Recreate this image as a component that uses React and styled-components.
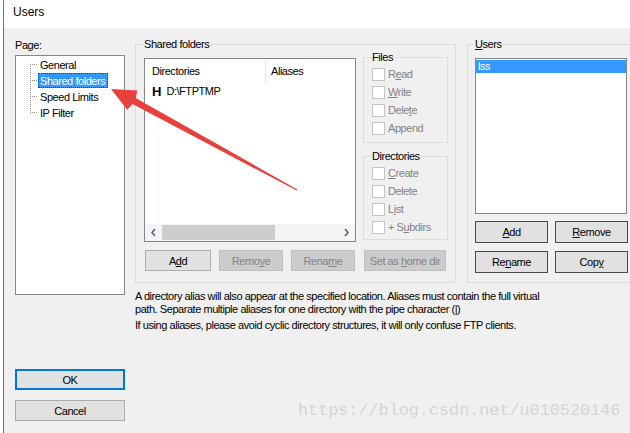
import React from 'react'
import styled, { createGlobalStyle } from 'styled-components'

const GlobalStyle = createGlobalStyle`
    html, body {
        margin: 0;
        padding: 0;
        background: #ffffff;
    }
    body {
        font-family: "Liberation Sans", Arial, sans-serif;
        font-size: 11px;
        letter-spacing: -0.45px;
        color: #000;
    }
    * { box-sizing: border-box; }
`

const Window = styled.div`
    position: relative;
    width: 627px;
    height: 433px;
    margin-left: 3px;
    border-left: 1px solid #3a7cb8;
    background: #f0f0f0;
    display: flex;
    flex-direction: column;
    overflow: hidden;
`

const TitleBar = styled.div`
    height: 28px;
    flex-shrink: 0;
    background: #ffffff;
    padding: 5px 0 0 9px;
    font-size: 12px;
    letter-spacing: 0;
    line-height: 15px;
`

const Body = styled.div`
    flex: 1;
    display: flex;
    gap: 10px;
    padding: 10px 0 0 11px;
`

const LeftColumn = styled.div`
    width: 110px;
    flex-shrink: 0;
    display: flex;
    flex-direction: column;
`

const Label = styled.div`
    line-height: 13px;
    margin-top: 1px;
`

const TreeBox = styled.div`
    margin-top: 3px;
    height: 240px;
    background: #ffffff;
    border: 1px solid #828790;
    padding: 0 0 0 14px;
`

const TreeItem = styled.div`
    display: flex;
    align-items: center;
    height: 16px;
    line-height: 16px;
`

const Connector = styled.span`
    width: 8px;
    height: 16px;
    flex-shrink: 0;
    background-image:
        repeating-linear-gradient(to right, #8c8c8c 0 1px, transparent 1px 2px),
        repeating-linear-gradient(to bottom, #8c8c8c 0 1px, transparent 1px 2px);
    background-size: 8px 1px, 1px ${p => (p.$first || p.$last ? '8px' : '16px')};
    background-position: 0 8px, 0 ${p => (p.$first ? '8px' : '0')};
    background-repeat: no-repeat;
`

const TreeText = styled.span`
    padding: 0 2px 0 1px;
    height: 15px;
    line-height: 14px;
    background: ${p => (p.$selected ? '#3399ff' : 'transparent')};
    color: ${p => (p.$selected ? '#ffffff' : '#000')};
    border: 1px ${p => (p.$selected ? 'dotted #1b3f6e' : 'solid transparent')};
`

const Button = styled.button`
    font-family: inherit;
    font-size: 11px;
    letter-spacing: -0.45px;
    height: ${p => p.$h || 21}px;
    width: ${p => (p.$w ? `${p.$w}px` : 'auto')};
    padding: 0;
    margin: 0;
    border: ${p => (p.$default ? '2px solid #0078d7' : `1px solid ${p.$dark ? '#4a4a4a' : '#adadad'}`)};
    background: ${p => (p.disabled ? '#cccccc' : '#e1e1e1')};
    color: ${p => (p.disabled ? '#838383' : '#000')};
    border-color: ${p => (p.disabled ? '#bfbfbf' : undefined)};
    text-align: center;
`

const OkButton = styled(Button)`
    margin-top: 74px;
`

const CancelButton = styled(Button)`
    margin-top: 10px;
`

const RightColumn = styled.div`
    flex: 1;
    min-width: 0;
    display: flex;
    flex-direction: column;
`

const TopRow = styled.div`
    display: flex;
    gap: 11px;
`

const GroupBox = styled.fieldset`
    margin: 0;
    min-width: 0;
    width: ${p => p.$w}px;
    flex-shrink: 0;
    border: 1px solid #dcdcdc;
    padding: ${p => p.$pad || '0 8px 9px 8px'};
`

const Legend = styled.legend`
    padding: 0 1px;
    margin-left: -1px;
    line-height: 13px;
    color: #000;
`

const SharedTop = styled.div`
    display: flex;
    gap: 7px;
`

const ListView = styled.div`
    margin-top: 7px;
    width: 212px;
    height: 184px;
    background: #ffffff;
    border: 1px solid #828790;
    display: flex;
    flex-direction: column;
`

const ListHeader = styled.div`
    display: flex;
    height: 24px;
    line-height: 24px;
`

const HeaderCell = styled.div`
    width: ${p => (p.$w ? `${p.$w}px` : 'auto')};
    flex: ${p => (p.$w ? 'none' : 1)};
    padding-left: ${p => p.$pl}px;
    border-right: ${p => (p.$w ? '1px solid #e5e5e5' : 'none')};
`

const ListRows = styled.div`
    flex: 1;
`

const ListRow = styled.div`
    display: flex;
    align-items: center;
    gap: 5px;
    height: 16px;
    padding-left: 7px;
`

const HomeMark = styled.span`
    font-weight: bold;
    font-size: 13px;
    letter-spacing: 0;
`

const ScrollBar = styled.div`
    height: 17px;
    display: flex;
    align-items: stretch;
    background: #f4f4f4;
`

const ScrollArrow = styled.div`
    width: 17px;
    display: flex;
    align-items: center;
    justify-content: center;
    flex-shrink: 0;
`

const ScrollTrack = styled.div`
    flex: 1;
    padding: 1px 0;
`

const ScrollThumb = styled.div`
    width: 113px;
    height: 100%;
    background: #cdcdcd;
`

const PermColumn = styled.div`
    flex: 1;
    display: flex;
    flex-direction: column;
    gap: 7px;
`

const CheckRow = styled.label`
    display: flex;
    align-items: center;
    gap: 3px;
    height: 18px;
    color: #838383;
`

const CheckBox = styled.span`
    width: 13px;
    height: 13px;
    border: 1px solid #c4c4c4;
    background: #ffffff;
    flex-shrink: 0;
`

const ButtonRow = styled.div`
    display: flex;
    gap: 8px;
    margin-top: 8px;
    padding-left: 1px;
`

const UserList = styled.div`
    margin-top: 7px;
    width: 152px;
    height: 156px;
    background: #ffffff;
    border: 1px solid #828790;
    padding: 1px 0 0 0;
`

const UserItem = styled.div`
    height: 13px;
    line-height: 13px;
    padding-left: 2px;
    background: ${p => (p.$selected ? '#3399ff' : 'transparent')};
    color: ${p => (p.$selected ? '#ffffff' : '#000')};
`

const UserButtons = styled.div`
    display: grid;
    grid-template-columns: 73px 73px;
    column-gap: 7px;
    row-gap: 8px;
    margin-top: 7px;
`

const Notes = styled.div`
    margin-top: 7px;
    line-height: 13px;
`

const NoteLine = styled.p`
    margin: ${p => (p.$gap ? '3px 0 0' : '0')};
`

const Watermark = styled.div`
    position: absolute;
    left: 294px;
    top: 401px;
    font-family: "Liberation Mono", "DejaVu Sans Mono", monospace;
    font-size: 16.8px;
    letter-spacing: 0;
    color: #d4d4d4;
`

const Overlay = styled.svg`
    position: absolute;
    left: -4px;
    top: 0;
    pointer-events: none;
`

const Chevron = ({ dir }) => (
    <svg width="7" height="9" viewBox="0 0 7 9">
        <path
            d={dir === 'left' ? 'M5 1 L2 4.5 L5 8' : 'M2 1 L5 4.5 L2 8'}
            fill="none"
            stroke="#606060"
            strokeWidth="1.6"
        />
    </svg>
)

const Check = ({ children }) => (
    <CheckRow>
        <CheckBox />
        <span>{children}</span>
    </CheckRow>
)

const treeItems = ['General', 'Shared folders', 'Speed Limits', 'IP Filter']

const App = () => {
    return (
        <>
            <GlobalStyle />
            <Window>
                <TitleBar>Users</TitleBar>
                <Body>
                    <LeftColumn>
                        <Label>Page:</Label>
                        <TreeBox>
                            {treeItems.map((item, i) => (
                                <TreeItem key={item}>
                                    <Connector $first={i === 0} $last={i === treeItems.length - 1} />
                                    <TreeText $selected={item === 'Shared folders'}>{item}</TreeText>
                                </TreeItem>
                            ))}
                        </TreeBox>
                        <OkButton $default>OK</OkButton>
                        <CancelButton>Cancel</CancelButton>
                    </LeftColumn>

                    <RightColumn>
                        <TopRow>
                            <GroupBox $w={321} $pad="0 7px 9px 8px">
                                <Legend>Shared folders</Legend>
                                <SharedTop>
                                    <ListView>
                                        <ListHeader>
                                            <HeaderCell $w={121} $pl={7}>Directories</HeaderCell>
                                            <HeaderCell $pl={5}>Aliases</HeaderCell>
                                        </ListHeader>
                                        <ListRows>
                                            <ListRow>
                                                <HomeMark>H</HomeMark>
                                                <span>D:\FTPTMP</span>
                                            </ListRow>
                                        </ListRows>
                                        <ScrollBar>
                                            <ScrollArrow><Chevron dir="left" /></ScrollArrow>
                                            <ScrollTrack><ScrollThumb /></ScrollTrack>
                                            <ScrollArrow><Chevron dir="right" /></ScrollArrow>
                                        </ScrollBar>
                                    </ListView>
                                    <PermColumn>
                                        <GroupBox $pad="1px 4px 5px 8px">
                                            <Legend>Files</Legend>
                                            <Check>R<u>e</u>ad</Check>
                                            <Check><u>W</u>rite</Check>
                                            <Check>Dele<u>t</u>e</Check>
                                            <Check>Append</Check>
                                        </GroupBox>
                                        <GroupBox $pad="1px 4px 3px 8px">
                                            <Legend>Directories</Legend>
                                            <Check><u>C</u>reate</Check>
                                            <Check>Delete</Check>
                                            <Check>L<u>i</u>st</Check>
                                            <Check>+ S<u>u</u>bdirs</Check>
                                        </GroupBox>
                                    </PermColumn>
                                </SharedTop>
                                <ButtonRow>
                                    <Button $w={66}>A<u>d</u>d</Button>
                                    <Button $w={64} disabled>Remo<u>v</u>e</Button>
                                    <Button $w={64} disabled>Rena<u>m</u>e</Button>
                                    <Button $w={82} disabled style={{ marginLeft: 1 }}>Set as <u>h</u>ome dir</Button>
                                </ButtonRow>
                            </GroupBox>

                            <GroupBox $w={172} $pad="0 7px 9px 7px">
                                <Legend><u>U</u>sers</Legend>
                                <UserList>
                                    <UserItem $selected>lss</UserItem>
                                </UserList>
                                <UserButtons>
                                    <Button $h={22} $dark><u>A</u>dd</Button>
                                    <Button $h={22} $dark><u>R</u>emove</Button>
                                    <Button $h={22} $dark>Re<u>n</u>ame</Button>
                                    <Button $h={22} $dark>Cop<u>y</u></Button>
                                </UserButtons>
                            </GroupBox>
                        </TopRow>

                        <Notes>
                            <NoteLine>
                                A directory alias will also appear at the specified location. Aliases must contain the full virtual
                                <br />
                                path. Separate multiple aliases for one directory with the pipe character (|)
                            </NoteLine>
                            <NoteLine $gap>
                                If using aliases, please avoid cyclic directory structures, it will only confuse FTP clients.
                            </NoteLine>
                        </Notes>
                    </RightColumn>
                </Body>

                <Watermark>https://blog.csdn.net/u010520146</Watermark>

                <Overlay width="630" height="433" viewBox="0 0 630 433">
                    <polygon
                        points="111,89 137.4,90.4 135.7,97.9 297.3,189.4 296.7,190.6 132.5,104.1 127.2,109.8"
                        fill="#e8413b"
                    />
                </Overlay>
            </Window>
        </>
    )
}

export default App
